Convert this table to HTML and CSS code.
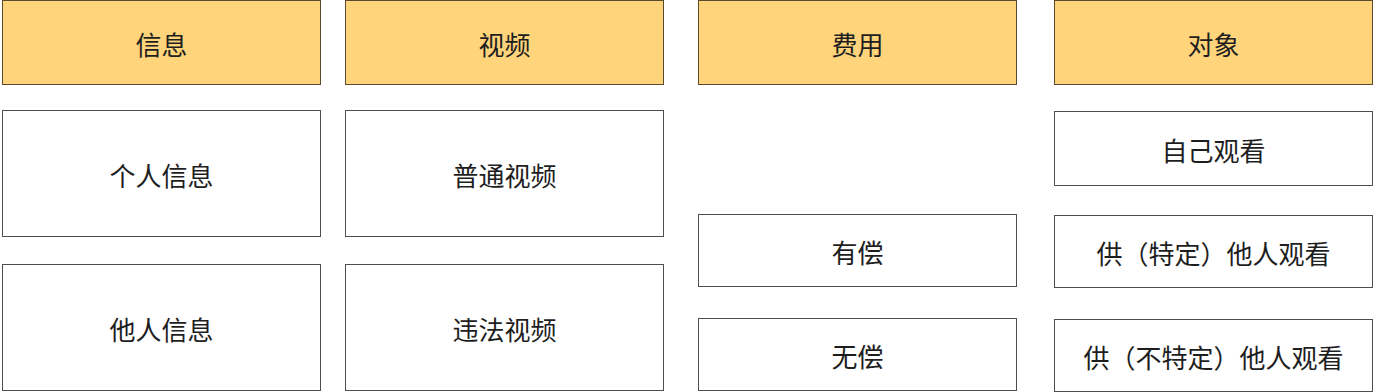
FILE: index.html
```html
<!DOCTYPE html>
<html lang="zh-CN">
<head>
<meta charset="utf-8">
<link rel="stylesheet" href="styles.css">
</head>
<body>
<div class="board">
  <div class="col c1">
    <div class="cell head">信息</div>
    <div class="cell tall first">个人信息</div>
    <div class="cell tall second">他人信息</div>
  </div>
  <div class="col c2">
    <div class="cell head">视频</div>
    <div class="cell tall first">普通视频</div>
    <div class="cell tall second">违法视频</div>
  </div>
  <div class="col c3">
    <div class="cell head">费用</div>
    <div class="cell short mid">有偿</div>
    <div class="cell short last">无偿</div>
  </div>
  <div class="col c4">
    <div class="cell head">对象</div>
    <div class="cell top">自己观看</div>
    <div class="cell short mid2">供（特定）他人观看</div>
    <div class="cell short last">供（不特定）他人观看</div>
  </div>
</div>
</body>
</html>
```
FILE: styles.css
```css
html, body {
  margin: 0;
  padding: 0;
  background: #ffffff;
}
body {
  width: 1374px;
  height: 392px;
  overflow: hidden;
  font-family: "Noto Sans CJK SC", "Noto Sans", sans-serif;
}
.board {
  display: flex;
  padding-left: 2px;
}
.col {
  display: flex;
  flex-direction: column;
  width: 319px;
}
.c2 { margin-left: 24px; }
.c3 { margin-left: 34px; }
.c4 { margin-left: 37px; }
.cell {
  box-sizing: border-box;
  display: flex;
  align-items: center;
  justify-content: center;
  border: 1px solid #4e4e4e;
  background: #ffffff;
  color: #1e1e1e;
  font-size: 26px;
  line-height: 1;
  padding-top: 2px;
}
.head {
  height: 85px;
  background: #ffd47b;
  border-color: #5c4a2e;
}
.tall { height: 127px; }
.first { margin-top: 25px; }
.second { margin-top: 27px; }
.short { height: 73px; }
.top { height: 75px; margin-top: 26px; }
.mid { margin-top: 129px; }
.mid2 { margin-top: 29px; }
.last { margin-top: 31px; }
```
